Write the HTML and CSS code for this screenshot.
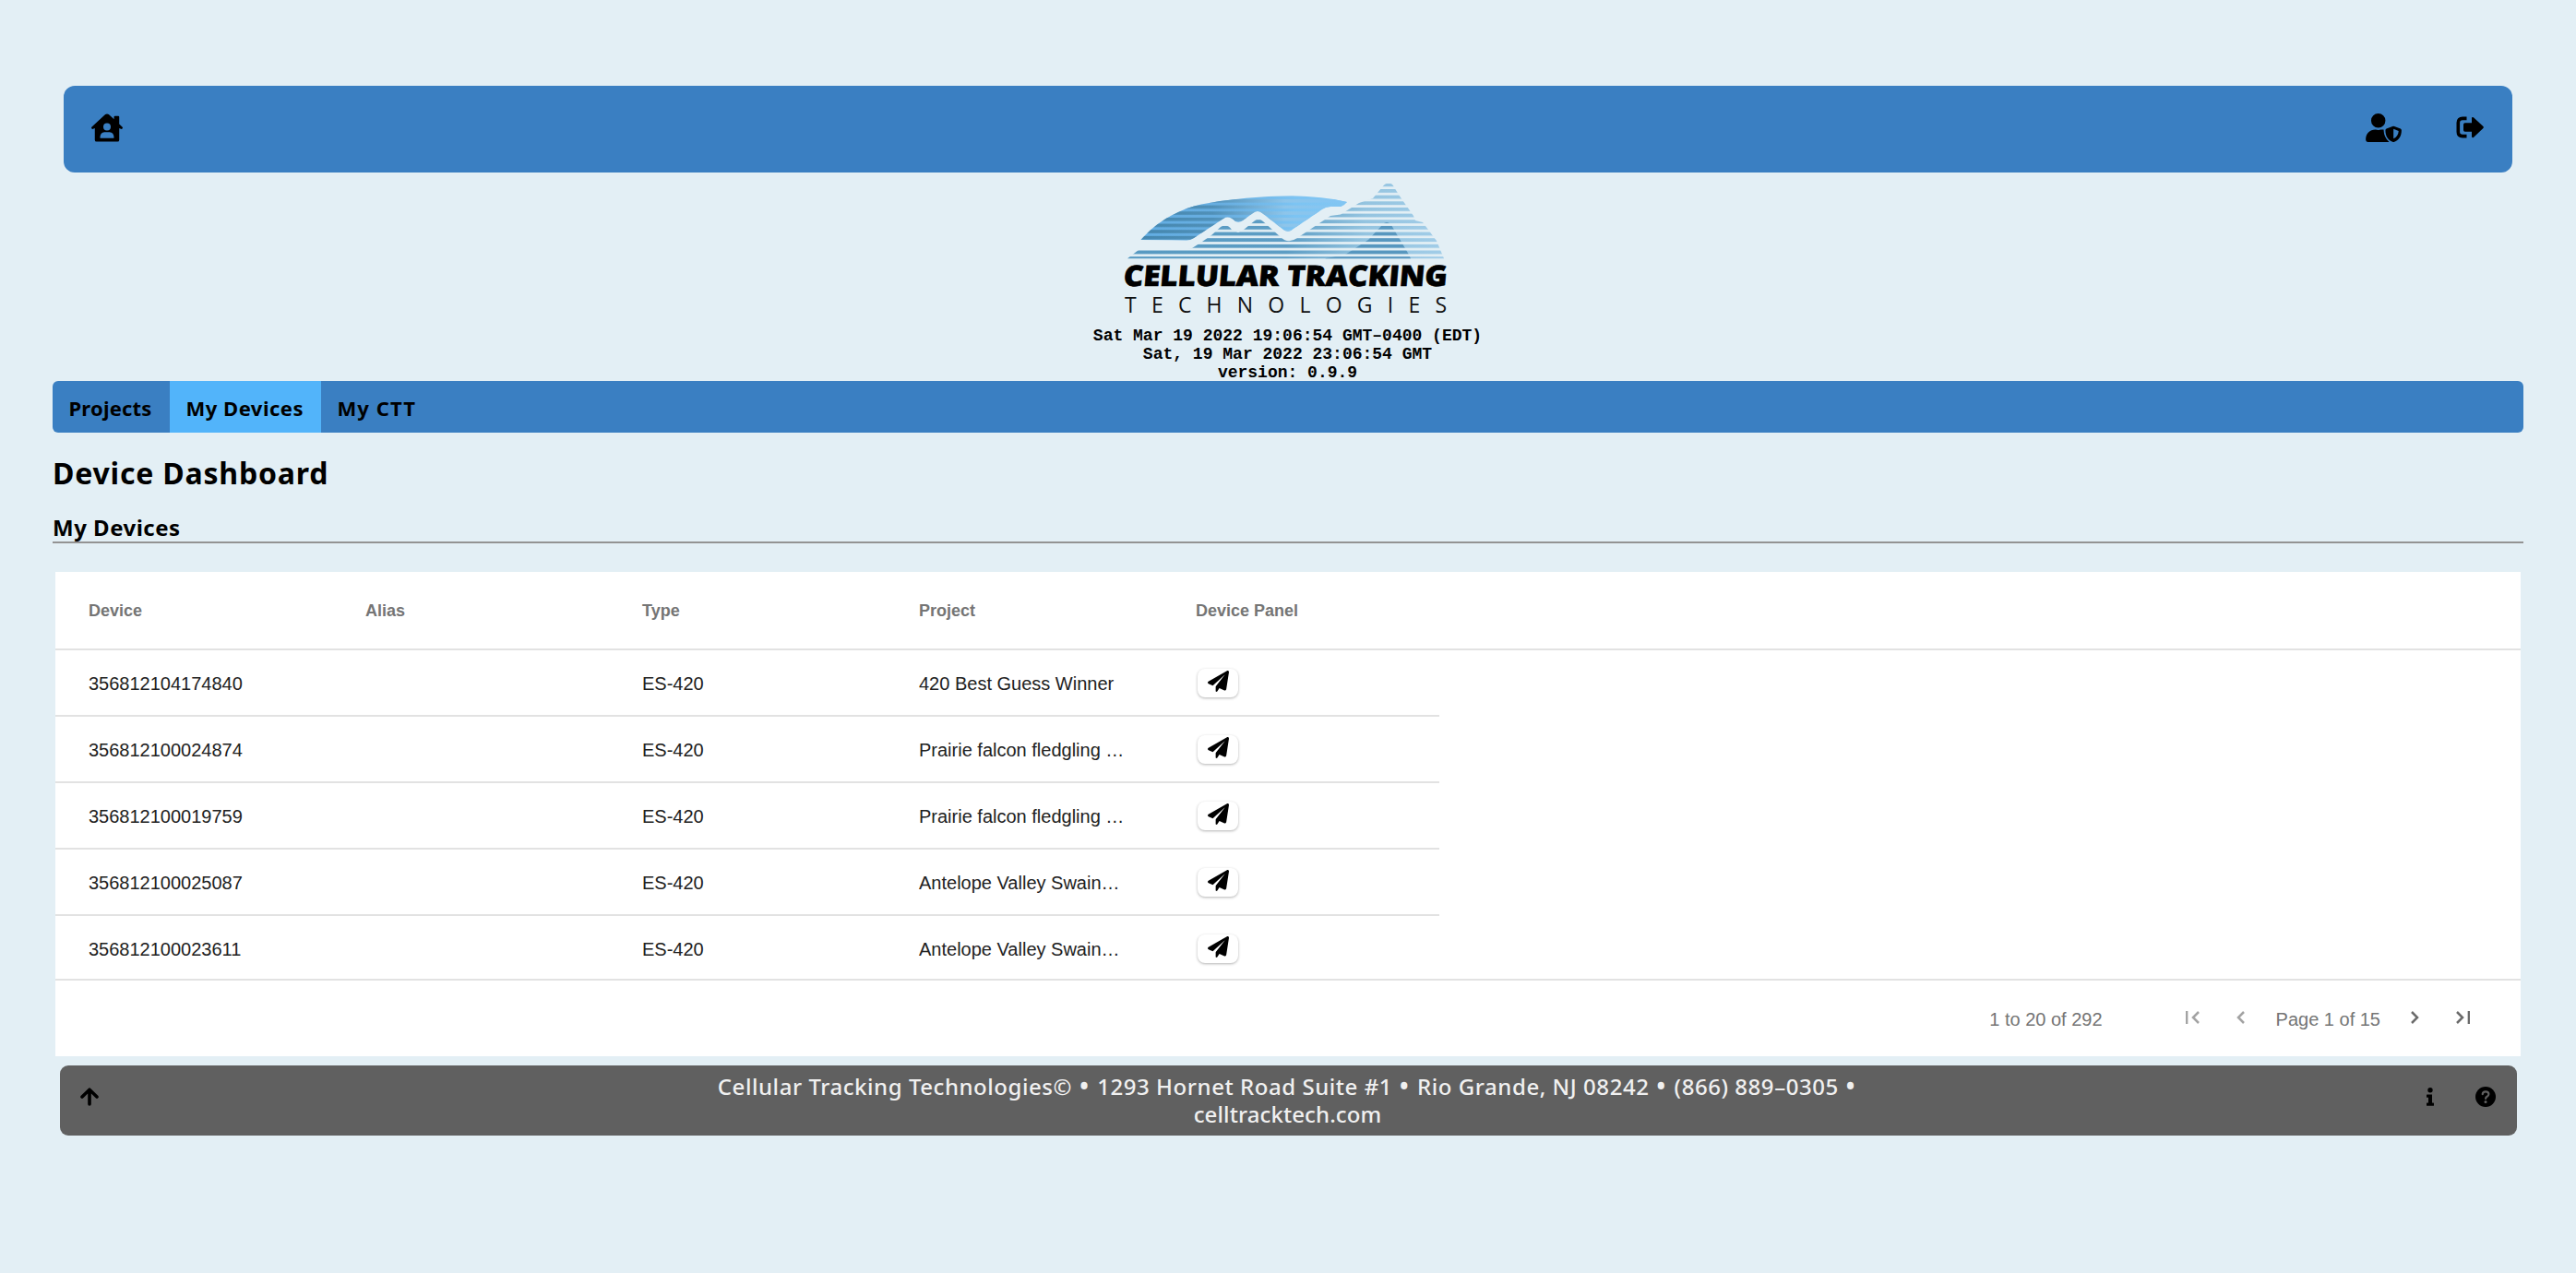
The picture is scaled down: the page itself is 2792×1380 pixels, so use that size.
FILE: index.html
```html
<!DOCTYPE html>
<html lang="en">
<head>
<meta charset="utf-8">
<title>Device Dashboard</title>
<link rel="stylesheet" href="styles.css">
</head>
<body>
<header class="topbar">
  <a class="home"><svg width="34" height="31" viewBox="0 0 576 512"><path fill-rule="evenodd" d="M512 190V56q0-16-16-16h-64q-16 0-16 16v43L320 12q-32-22-64 0L10 237q-18 20-2 36 16 14 34 2l22-12v217q0 32 32 32h384q32 0 32-32V263l22 12q18 12 34-2 16-16-2-36zM288 171a68 68 0 1 1 0 136 68 68 0 0 1 0-136zM400 448H176q-16 0-16-16 6-92 80-96h96q74 4 80 96 0 16-16 16z"/></svg></a>
  <nav class="account">
    <svg width="39" height="31" viewBox="0 0 640 512"><path d="M224 256a128 128 0 1 0 0-256 128 128 0 0 0 0 256zM320 290q-20-4-46-2-50 16-100 0C70 288 0 360 0 464q0 48 44 48h376q-96-80-100-222z"/><path fill-rule="evenodd" d="M622 272l-110-42q-16-6-32 0l-110 42q-18 8-18 28c0 108 50 180 128 208q16 6 32 0c78-28 128-100 128-208q0-20-18-28zM496 450V278l92 34c-4 66-34 112-92 138z"/></svg>
    <svg width="30" height="24" viewBox="0 0 30 24"><path d="M11.500 2.400H7Q2.300 2.400 2.300 7v10q0 4.600 4.700 4.600h4.500" fill="none" stroke="#000" stroke-width="3.600"/><path d="M8 9q0-1.700 1.700-1.700H17V2.200q0-2 1.900-.9L29.400 11q.9 1 0 2L18.900 22.900q-1.900.9-1.900-1.100v-5.100H9.700Q8 16.700 8 15z"/></svg>
  </nav>
</header>

<section class="brand">
  <svg class="logo" width="460" height="153" viewBox="1160 187 460 153">
    <defs>
      <linearGradient id="sky" x1="0" x2="1"><stop offset="0" stop-color="#62ade3"/><stop offset=".4" stop-color="#68aee0"/><stop offset=".75" stop-color="#7cc4f3"/><stop offset="1" stop-color="#82c6f2"/></linearGradient>
      <linearGradient id="skyband" x1="0" x2="1"><stop offset="0" stop-color="#4486ae"/><stop offset=".35" stop-color="#5090b8"/><stop offset=".7" stop-color="#8ec5ea"/><stop offset="1" stop-color="#80c5f5"/></linearGradient>
      <linearGradient id="hill" gradientUnits="userSpaceOnUse" x1="1223" x2="1565" y1="0" y2="0"><stop offset="0" stop-color="#579ac2"/><stop offset=".5" stop-color="#5d9dc4"/><stop offset=".75" stop-color="#94c4e0"/><stop offset="1" stop-color="#a2cde8"/></linearGradient>
      <pattern id="bands" width="2000" height="6.650" patternUnits="userSpaceOnUse" y="196"><rect width="2000" height="3.600" fill="#fff"/></pattern>
      <pattern id="stripes" width="2000" height="6.650" patternUnits="userSpaceOnUse" y="198.350"><rect width="2000" height="3.900" fill="#fff"/></pattern>
      <mask id="bandmask" maskUnits="userSpaceOnUse" x="1160" y="187" width="460" height="153"><rect x="1160" y="187" width="460" height="153" fill="url(#bands)"/></mask>
      <mask id="stripemask" maskUnits="userSpaceOnUse" x="1160" y="187" width="460" height="153"><rect x="1160" y="187" width="460" height="153" fill="url(#stripes)"/></mask>
      <path id="dome" d="M1236.500 260C1255 239 1280 226 1302 221.500Q1350 212.500 1400 212.500Q1434 212.500 1460 219Q1457 223 1453 224H1442Q1437 224 1433 227L1399 250Q1395 252 1391 249L1368 231Q1363 227 1358 231L1347 239Q1343 242 1339 240Q1332 233 1326 237L1294 258Q1290 260.500 1286 260.500z"/>
    </defs>
    <use href="#dome" fill="url(#sky)"/>
    <g mask="url(#bandmask)"><use href="#dome" fill="url(#skyband)"/></g>
    <g mask="url(#stripemask)">
      <path fill="url(#hill)" d="M1222 280.300L1234 271H1285L1292 269L1303 262L1313 255L1323 246Q1330 242 1335 249L1342 252L1348 249L1359 240Q1364 235 1369 240L1388 257Q1396 265 1406 258L1442 234L1453 232.500L1473 220L1488 215L1498 203Q1501 199 1503 199H1507Q1509 199 1511 203L1518 214L1532 234L1534 239L1542 241L1548 249L1557 261L1565 280.300z"/>
      <path fill="#5797bf" d="M1436 280.300L1458 276L1483 260L1498 244Q1503 238 1508 244L1527 276L1529 280.300z"/>
    </g>
    <text class="logo-name" transform="translate(1217 309.500) skewX(-5)" x="0" y="0" textLength="351" lengthAdjust="spacingAndGlyphs">CELLULAR TRACKING</text>
    <text class="logo-sub" x="1219" y="338.500" textLength="349">TECHNOLOGIES</text>
  </svg>
  <div class="clock">
    <div>Sat Mar 19 2022 19:06:54 GMT–0400 (EDT)</div>
    <div>Sat, 19 Mar 2022 23:06:54 GMT</div>
    <div>version: 0.9.9</div>
  </div>
</section>

<main class="content">
  <nav class="tabs">
    <a class="tab projects">Projects</a>
    <a class="tab devices active">My Devices</a>
    <a class="tab ctt">My CTT</a>
  </nav>
  <h1>Device Dashboard</h1>
  <h2>My Devices</h2>

  <div class="grid">
    <div class="row head"><span>Device</span><span>Alias</span><span>Type</span><span>Project</span><span>Device Panel</span></div>
    <div class="rows">
      <div class="row"><span>356812104174840</span><span></span><span>ES-420</span><span>420 Best Guess Winner</span><span><button class="send"><svg width="23" height="23" viewBox="0 0 512 512"><use href="#plane"/></svg></button></span></div>
      <div class="row"><span>356812100024874</span><span></span><span>ES-420</span><span>Prairie falcon fledgling …</span><span><button class="send"><svg width="23" height="23" viewBox="0 0 512 512"><use href="#plane"/></svg></button></span></div>
      <div class="row"><span>356812100019759</span><span></span><span>ES-420</span><span>Prairie falcon fledgling …</span><span><button class="send"><svg width="23" height="23" viewBox="0 0 512 512"><use href="#plane"/></svg></button></span></div>
      <div class="row"><span>356812100025087</span><span></span><span>ES-420</span><span>Antelope Valley Swain…</span><span><button class="send"><svg width="23" height="23" viewBox="0 0 512 512"><use href="#plane"/></svg></button></span></div>
      <div class="row"><span>356812100023611</span><span></span><span>ES-420</span><span>Antelope Valley Swain…</span><span><button class="send"><svg width="23" height="23" viewBox="0 0 512 512"><use href="#plane"/></svg></button></span></div>
    </div>
    <div class="paging">
      <span class="summary">1 to 20 of 292</span>
      <svg class="off first" width="15" height="14" viewBox="0 0 15 14"><path d="M1.100 0v14M14 1L8 7l6 6"/></svg>
      <svg class="off prev" width="9" height="14" viewBox="0 0 9 14"><path d="M8 1L2 7l6 6"/></svg>
      <span class="page">Page 1 of 15</span>
      <svg class="next" width="9" height="14" viewBox="0 0 9 14"><path d="M1 1l6 6-6 6"/></svg>
      <svg width="15" height="14" viewBox="0 0 15 14"><path d="M13.900 0v14M1 1l6 6-6 6"/></svg>
    </div>
  </div>
</main>

<footer class="footer">
  <svg class="up" width="20" height="20" viewBox="0 0 20 20"><path d="M10 18V2.500M2 10l8-7.800L18 10" fill="none" stroke="#000" stroke-width="3.600" stroke-linecap="round" stroke-linejoin="round"/></svg>
  <div class="address"><div>Cellular Tracking Technologies© <b>•</b> 1293 Hornet Road Suite #1 <b>•</b> Rio Grande, NJ 08242 <b>•</b> (866) 889–0305 <b>•</b></div><div class="site">celltracktech.com</div></div>
  <div class="help">
    <svg width="8" height="20" viewBox="0 0 8 20"><circle cx="4" cy="2.700" r="2.700"/><path d="M.6 7.400H6v9.200h1.400q.6 0 .6.600v2q0 .6-.6.600H.6q-.6 0-.6-.6v-2q0-.6.600-.6H2v-5.800H.6q-.6 0-.6-.6V8q0-.6.600-.6z"/></svg>
    <svg width="22" height="22" viewBox="0 0 22 22"><circle cx="11" cy="11" r="11"/><path d="M7.700 8.200q.2-2.800 3.300-2.800 3.400 0 3.400 2.700 0 1.600-1.800 2.600-1.500.8-1.500 2.300" fill="none" stroke="#606060" stroke-width="2.200" stroke-linecap="round"/><circle cx="11" cy="16.400" r="1.500" fill="#606060"/></svg>
  </div>
</footer>

<svg width="0" height="0"><defs><path id="plane" d="M511.600 36.860l-64 415.100c-1.500 9.734-7.375 18.220-15.970 23.050c-4.844 2.719-10.270 4.097-15.680 4.097c-4.188 0-8.319-.8154-12.290-2.472l-122.600-51.100l-50.860 76.290C226.300 508.500 219.800 512 212.800 512C201.300 512 192 502.700 192 491.200v-96.180c0-7.115 2.372-14.030 6.742-19.640L416 96l-293.700 264.300L19.690 317.500C8.438 312.800 .8125 302.200 .0625 289.100s5.469-23.720 16.060-29.770l448-255.100c10.690-6.109 23.880-5.547 34 1.406S513.500 24.720 511.600 36.860z"/></defs></svg>
</body>
</html>
```
FILE: styles.css
```css
* { box-sizing: border-box; }
body {
  margin: 0;
  height: 1380px;
  overflow: hidden;
  background: #e3eff5;
  color: #000;
  font-family: "Noto Sans", "Open Sans", sans-serif;
}
svg { display: block; }

.topbar {
  display: flex;
  justify-content: space-between;
  align-items: flex-start;
  height: 94px;
  margin: 93px 69px 0;
  padding: 30px 31px 0 30px;
  border-radius: 12px;
  background: #3a7fc2;
}
.account { display: flex; gap: 59px; }
.account svg:last-child { margin-top: 3px; }

.brand {
  display: flex;
  flex-direction: column;
  align-items: center;
  height: 226px;
}
.logo { margin-right: 12px; overflow: visible; }
.logo-name { font: 800 31px "Open Sans", sans-serif; stroke: #000; stroke-width: .7px; }
.logo-sub { font: 400 23px "Open Sans", sans-serif; fill: #111; }
.clock {
  margin: 14px 1px 0 0;
  font: bold 18px/20px "Liberation Mono", monospace;
  text-align: center;
}

.content { margin: 0 57px; }
.tabs {
  display: flex;
  height: 56px;
  border-radius: 6px;
  background: #3a7fc2;
  overflow: hidden;
}
.tab {
  padding: 0 18px 0 17.5px;
  font-size: 22px;
  font-weight: 700;
  line-height: 58px;
  white-space: nowrap;
}
.projects { width: 127px; letter-spacing: .2px; }
.devices { width: 164px; letter-spacing: .5px; }
.ctt { letter-spacing: 1.1px; }
.active { background: #52b4fa; }
h1 {
  margin: 22px 0 0;
  font-size: 32px;
  letter-spacing: .8px;
  line-height: 44px;
}
h2 {
  height: 54px;
  margin: 0;
  padding-top: 21px;
  border-bottom: 2px solid #939393;
  font-size: 24px;
  letter-spacing: .5px;
  line-height: 32px;
}

.grid {
  height: 525px;
  margin: 31px 3px 0;
  background: #fff;
  font-family: "Liberation Sans", Arial, sans-serif;
  font-size: 20px;
  color: #212121;
}
.row {
  display: grid;
  grid-template-columns: repeat(5, 300px);
  width: 1500px;
  height: 72px;
  border-bottom: 2px solid #e2e2e2;
  line-height: 72px;
}
.row span { padding-left: 36px; white-space: nowrap; }
.row.head {
  width: auto;
  height: 85px;
  color: #757575;
  font-size: 18px;
  font-weight: 700;
  line-height: 85px;
}
.rows {
  height: 358px;
  border-bottom: 2px solid #e2e2e2;
  overflow: hidden;
}
.row .send {
  display: flex;
  justify-content: center;
  width: 44px;
  height: 31px;
  margin: 20px 0 0 2px;
  padding: 2px 0 0;
  border: 0;
  border-radius: 8px;
  background: #fff;
  box-shadow: 0 1px 3px rgba(0, 0, 0, .3);
}
.paging {
  display: flex;
  align-items: center;
  justify-content: flex-end;
  height: 82px;
  padding: 0 55px 0 0;
  color: #757575;
}
.paging svg { margin-top: -2px; fill: none; stroke: #6b6b6b; stroke-width: 2.500; }
.paging .off { stroke: #a3a3a3; }
.paging span { padding-top: 3px; }
.summary { margin-right: 90px; }
.paging .first { margin-right: 40px; }
.paging .prev { margin-right: 34px; }
.page { margin-right: 33px; }
.paging .next { margin-right: 40px; }

.footer {
  display: flex;
  justify-content: space-between;
  height: 76px;
  margin: 10px 64px 0 65px;
  padding: 0 23px 0 22px;
  border-radius: 9px;
  background: #606060;
}
.up { margin-top: 24px; }
.address {
  padding: 8px 0 0 54px;
  color: #f0f0f0;
  font-size: 24px;
  font-weight: 500;
  letter-spacing: .55px;
  line-height: 30px;
  text-align: center;
  white-space: nowrap;
}
.address b { font-size: 32px; font-weight: 400; letter-spacing: 1.5px; line-height: 0; vertical-align: -2px; }
.site { letter-spacing: .1px; }
.help { display: flex; gap: 45px; padding-top: 23px; }
.help svg:first-child { margin-top: 1px; }
```
